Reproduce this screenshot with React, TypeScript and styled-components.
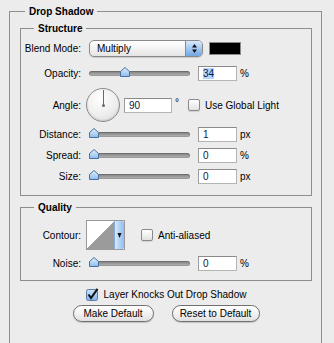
import styled, { createGlobalStyle } from 'styled-components';

const GlobalStyle = createGlobalStyle`
  html, body {
    margin: 0;
    padding: 0;
    background: #ececec;
    overflow: hidden;
  }
  body {
    font-family: "Liberation Sans", Arial, sans-serif;
    font-size: 10px;
    color: #000;
  }
`;

const Dialog = styled.fieldset`
  box-sizing: border-box;
  width: 313px;
  height: 345px;
  margin: 5px 0 0 9px;
  padding: 4px 9px 0 10px;
  border: 1px solid #8e8e8e;
  min-width: 0;
`;

const Group = styled.fieldset<{ $mt: number; $pt: number; $pb: number }>`
  margin: ${(p) => p.$mt}px 0 0 0;
  padding: ${(p) => p.$pt}px 0 ${(p) => p.$pb}px 0;
  border: 1px solid #8e8e8e;
  min-width: 0;
`;

const Legend = styled.legend<{ $ml: number }>`
  margin-left: ${(p) => p.$ml}px;
  padding: 0 4px;
  font-weight: bold;
  font-size: 10px;
  line-height: 13px;
  height: 13px;
`;

const Row = styled.div<{ $h: number; $mt: number }>`
  display: flex;
  align-items: center;
  height: ${(p) => p.$h}px;
  margin-top: ${(p) => p.$mt}px;
`;

const Label = styled.div`
  width: 60px;
  margin-right: 8px;
  text-align: right;
  white-space: nowrap;
`;

const Select = styled.div`
  box-sizing: border-box;
  width: 114px;
  height: 17px;
  display: flex;
  border: 1px solid #8a8a8a;
  border-radius: 5px;
  background: linear-gradient(#ffffff, #f3f3f3 50%, #e4e4e4);
  box-shadow: 0 1px 1px rgba(0, 0, 0, 0.15);
  overflow: hidden;
`;

const SelectText = styled.div`
  flex: 1;
  padding-left: 7px;
  line-height: 15px;
`;

const SelectArrow = styled.div`
  width: 16px;
  border-left: 1px solid #6d8fbd;
  background: linear-gradient(#d8e9fb, #a3c9f2 50%, #6fa7e6);
  display: flex;
  align-items: center;
  justify-content: center;
`;

const Swatch = styled.div`
  box-sizing: border-box;
  width: 32px;
  height: 13px;
  margin-left: 6px;
  background: #000;
  border: 1px solid #8a8a8a;
`;

const Slider = styled.div`
  position: relative;
  width: 101px;
  height: 15px;
`;

const Track = styled.div`
  position: absolute;
  left: 0;
  right: 0;
  top: 5px;
  height: 5px;
  border-radius: 3px;
  background: linear-gradient(#7c7c7c, #9a9a9a 50%, #bdbdbd);
  box-shadow: inset 0 0 0 1px rgba(0, 0, 0, 0.15);
`;

const Thumb = styled.svg`
  position: absolute;
  top: 1px;
`;

const Field = styled.div<{ $w: number; $ml: number }>`
  box-sizing: border-box;
  width: ${(p) => p.$w}px;
  height: 15px;
  margin-left: ${(p) => p.$ml}px;
  padding-left: 4px;
  line-height: 13px;
  background: #fff;
  border: 1px solid #b4b4b4;
  border-top-color: #8a8a8a;
  border-left-color: #9c9c9c;
  color: #0a1a3a;
`;

const Selected = styled.span`
  background: #b5d5ff;
`;

const Unit = styled.span<{ $ml: number; $raise?: boolean }>`
  margin-left: ${(p) => p.$ml}px;
  align-self: ${(p) => (p.$raise ? 'flex-start' : 'center')};
  margin-top: ${(p) => (p.$raise ? '9px' : '0')};
`;

const Dial = styled.div`
  box-sizing: border-box;
  position: relative;
  width: 34px;
  height: 34px;
  margin-left: -3px;
  border-radius: 50%;
  border: 1px solid #8c8c8c;
  background: radial-gradient(circle at 40% 30%, #ffffff, #eeeeee 55%, #d8d8d8);
  box-shadow: inset 0 -1px 2px rgba(0, 0, 0, 0.12);
`;

const DialHand = styled.div`
  position: absolute;
  left: 15.5px;
  top: 1px;
  width: 1px;
  height: 15px;
  background: #6a6a6a;
  &::after {
    content: '';
    position: absolute;
    left: -1px;
    bottom: -2px;
    width: 3px;
    height: 3px;
    border-radius: 50%;
    background: #6a6a6a;
  }
`;

const Box = styled.div<{ $ml: number }>`
  box-sizing: border-box;
  width: 12px;
  height: 12px;
  margin-left: ${(p) => p.$ml}px;
  border: 1px solid #8a8a8a;
  border-radius: 2px;
  background: linear-gradient(#ffffff, #e2e2e2);
  box-shadow: 0 1px 1px rgba(0, 0, 0, 0.12);
`;

const CheckLabel = styled.span`
  margin-left: 5px;
  white-space: nowrap;
`;

const Contour = styled.div`
  box-sizing: border-box;
  width: 39px;
  height: 30px;
  margin-left: -3px;
  display: flex;
  border: 1px solid #9a9a9a;
  background: #fff;
`;

const ContourCurve = styled.div`
  flex: 1;
  background: linear-gradient(to bottom right, #ffffff 50%, #9b9b9b 50%);
`;

const ContourArrow = styled.div`
  width: 9px;
  border-left: 1px solid #86a9d6;
  background: linear-gradient(to right, #d7e8fb, #8fbdf0);
  display: flex;
  align-items: center;
  justify-content: center;
  border-radius: 0 2px 2px 0;
`;

const CenterRow = styled.div<{ $h: number; $mt: number; $gap: number }>`
  display: flex;
  align-items: center;
  justify-content: center;
  gap: ${(p) => p.$gap}px;
  height: ${(p) => p.$h}px;
  margin-top: ${(p) => p.$mt}px;
`;

const Button = styled.div<{ $w: number }>`
  box-sizing: border-box;
  width: ${(p) => p.$w}px;
  height: 17px;
  border: 1px solid #6f6f6f;
  border-radius: 9px;
  background: linear-gradient(#ffffff, #f2f2f2 50%, #e0e0e0);
  box-shadow: 0 1px 1px rgba(0, 0, 0, 0.18);
  text-align: center;
  line-height: 15px;
  white-space: nowrap;
`;

const ThumbIcon = ({ value }: { value: number }) => (
  <Thumb width="10" height="10" viewBox="0 0 10 10" style={{ left: `${(value / 100) * 91}px` }}>
    <defs>
      <linearGradient id="tg" x1="0" y1="0" x2="0" y2="1">
        <stop offset="0" stopColor="#e4f0fc" />
        <stop offset="1" stopColor="#8cbcee" />
      </linearGradient>
    </defs>
    <path d="M5 0.5 L9.5 4.5 L9.5 9.5 L0.5 9.5 L0.5 4.5 Z" fill="url(#tg)" stroke="#4d6f9e" strokeWidth="1" />
  </Thumb>
);

const SliderBar = ({ value }: { value: number }) => (
  <Slider>
    <Track />
    <ThumbIcon value={value} />
  </Slider>
);

const ValueRow = ({
  label,
  value,
  unit,
  pos,
  mt,
}: {
  label: string;
  value: string;
  unit: string;
  pos: number;
  mt: number;
}) => (
  <Row $h={15} $mt={mt}>
    <Label>{label}</Label>
    <SliderBar value={pos} />
    <Field $w={39} $ml={8}>{value}</Field>
    <Unit $ml={3}>{unit}</Unit>
  </Row>
);

export default function App() {
  return (
    <>
      <GlobalStyle />
      <Dialog>
        <Legend $ml={5}>Drop Shadow</Legend>
        <Group $mt={0} $pt={5} $pb={11}>
          <Legend $ml={13}>Structure</Legend>
          <Row $h={17} $mt={0}>
            <Label>Blend Mode:</Label>
            <Select>
              <SelectText>Multiply</SelectText>
              <SelectArrow>
                <svg width="7" height="11" viewBox="0 0 7 11">
                  <path d="M3.5 1 L6 4.5 L1 4.5 Z M3.5 10 L6 6.5 L1 6.5 Z" fill="#111" />
                </svg>
              </SelectArrow>
            </Select>
            <Swatch />
          </Row>
          <Row $h={15} $mt={9}>
            <Label>Opacity:</Label>
            <SliderBar value={34} />
            <Field $w={39} $ml={8}>
              <Selected>34</Selected>
            </Field>
            <Unit $ml={3}>%</Unit>
          </Row>
          <Row $h={34} $mt={7}>
            <Label>Angle:</Label>
            <Dial>
              <DialHand />
            </Dial>
            <Field $w={48} $ml={4}>90</Field>
            <Unit $ml={3} $raise>
              °
            </Unit>
            <Box $ml={9} />
            <CheckLabel>Use Global Light</CheckLabel>
          </Row>
          <ValueRow label="Distance:" value="1" unit="px" pos={0} mt={5} />
          <ValueRow label="Spread:" value="0" unit="%" pos={0} mt={6} />
          <ValueRow label="Size:" value="0" unit="px" pos={0} mt={6} />
        </Group>
        <Group $mt={5} $pt={6} $pb={9}>
          <Legend $ml={13}>Quality</Legend>
          <Row $h={30} $mt={0}>
            <Label>Contour:</Label>
            <Contour>
              <ContourCurve />
              <ContourArrow>
                <svg width="5" height="8" viewBox="0 0 5 8">
                  <path d="M0.5 2 L4.5 2 L2.5 7 Z" fill="#111" />
                </svg>
              </ContourArrow>
            </Contour>
            <Box $ml={16} />
            <CheckLabel>Anti-aliased</CheckLabel>
          </Row>
          <ValueRow label="Noise:" value="0" unit="%" pos={0} mt={6} />
        </Group>
        <CenterRow $h={12} $mt={7} $gap={0}>
          <svg width="13" height="13" viewBox="0 0 13 13">
            <defs>
              <linearGradient id="cb" x1="0" y1="0" x2="0" y2="1">
                <stop offset="0" stopColor="#cfe3f9" />
                <stop offset="1" stopColor="#7fb2ea" />
              </linearGradient>
            </defs>
            <rect x="0.5" y="1.5" width="11" height="11" rx="2" fill="url(#cb)" stroke="#5a7aa6" />
            <path d="M2.5 6.5 L5 10 L11.5 0.8" fill="none" stroke="#111" strokeWidth="2" />
          </svg>
          <CheckLabel>Layer Knocks Out Drop Shadow</CheckLabel>
        </CenterRow>
        <CenterRow $h={17} $mt={5} $gap={18}>
          <Button $w={81}>Make Default</Button>
          <Button $w={88}>Reset to Default</Button>
        </CenterRow>
      </Dialog>
    </>
  );
}
